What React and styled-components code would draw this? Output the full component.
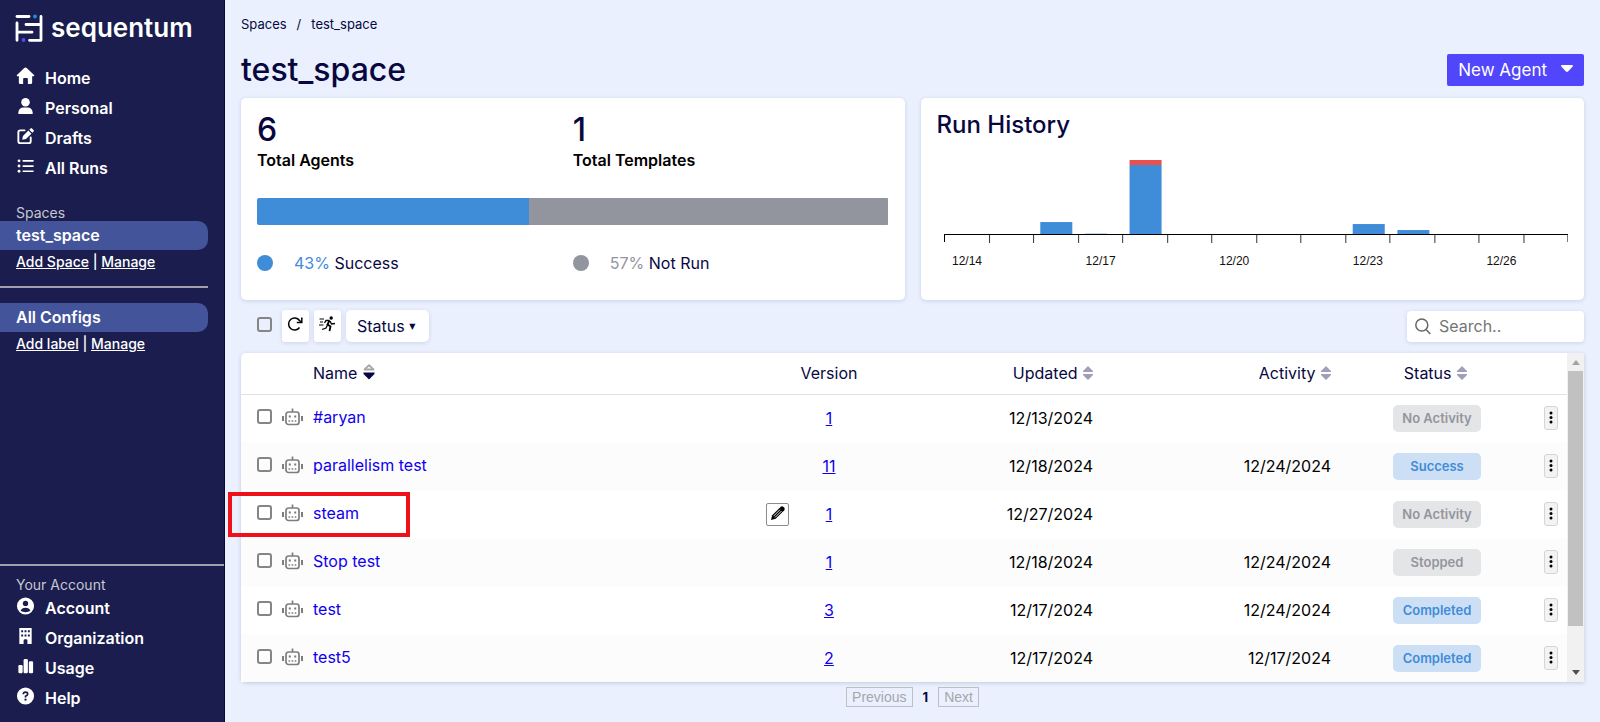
import React, { useState } from "react";
import styled, { createGlobalStyle } from "styled-components";

const navLinks = [
  { label: "Home", icon: "home" },
  { label: "Personal", icon: "person" },
  { label: "Drafts", icon: "draft" },
  { label: "All Runs", icon: "list" },
];

const accountLinks = [
  { label: "Account", icon: "account" },
  { label: "Organization", icon: "building" },
  { label: "Usage", icon: "usage" },
  { label: "Help", icon: "help" },
];

const agents = [
  { name: "#aryan", version: 1, updated: "12/13/2024", activity: "", status: "No Activity" },
  { name: "parallelism test", version: 11, updated: "12/18/2024", activity: "12/24/2024", status: "Success" },
  { name: "steam", version: 1, updated: "12/27/2024", activity: "", status: "No Activity", editable: true, marked: true },
  { name: "Stop test", version: 1, updated: "12/18/2024", activity: "12/24/2024", status: "Stopped" },
  { name: "test", version: 3, updated: "12/17/2024", activity: "12/24/2024", status: "Completed" },
  { name: "test5", version: 2, updated: "12/17/2024", activity: "12/17/2024", status: "Completed" },
];

// day index -> height of the successful and the failed part
const runs = [
  { day: 2, ok: 12, failed: 0 },
  { day: 4, ok: 69, failed: 5 },
  { day: 9, ok: 10, failed: 0 },
  { day: 10, ok: 4, failed: 0 },
];

const icons = {
  home: (
    <path d="M10 0.500Q10.700 0.500 11.300 1.100L19 8.300Q19.700 9.500 18.500 9.700H17V16.500Q17 18 15.500 18H12.500V12.500Q12.500 11.500 11.500 11.500H8.500Q7.500 11.500 7.500 12.500V18H4.500Q3 18 3 16.500V9.700H1.500Q0.300 9.500 1 8.300L8.700 1.100Q9.300 0.500 10 0.500Z" />
  ),
  person: (
    <>
      <circle cx="10" cy="5.500" r="4.500" />
      <path d="M2.500 18V16Q3 11 8 11H12Q17 11 17.500 16V18Z" />
    </>
  ),
  draft: (
    <>
      <path
        d="M9 3.500H4.500Q2.500 3.500 2.500 5.500V15Q2.500 17 4.500 17H13.500Q15.500 17 15.500 15V11"
        fill="none"
        stroke="#fff"
        strokeWidth="2"
        strokeLinecap="round"
      />
      <path d="M6.500 13.500L7.300 9.500L13 3.800L16.200 7L10.500 12.700Z" />
      <path d="M14 2.800L15.300 1.500Q16 0.800 16.800 1.500L18.500 3.200Q19.200 4 18.500 4.700L17.200 6Z" />
    </>
  ),
  list: (
    <>
      <path d="M7 4H18.500M7 9.500H18.500M7 15H18.500" stroke="#fff" strokeWidth="1.800" />
      <circle cx="3.200" cy="4" r="1.500" />
      <circle cx="3.200" cy="9.500" r="1.500" />
      <circle cx="3.200" cy="15" r="1.500" />
    </>
  ),
  account: (
    <>
      <circle cx="10" cy="9.500" r="9" />
      <circle cx="10" cy="6.800" r="2.800" fill="#1a1d4e" />
      <path d="M4.800 14.500Q6 11.300 10 11.300T15.200 14.500Q13 16 10 16T4.800 14.500Z" fill="#1a1d4e" />
    </>
  ),
  building: (
    <path
      fillRule="evenodd"
      d="M3.500 1H16.500V18H12V14Q12 13 10.500 13H9.500Q8 13 8 14V18H3.500ZM5.500 3.500V5.500H7.500V3.500ZM9 3.500V5.500H11V3.500ZM12.500 3.500V5.500H14.500V3.500ZM5.500 8V10H7.500V8ZM9 8V10H11V8ZM12.500 8V10H14.500V8Z"
    />
  ),
  usage: (
    <>
      <rect x="2.500" y="8.500" width="4.500" height="8.500" rx="1.300" />
      <rect x="8" y="2" width="4.500" height="15" rx="1.300" />
      <rect x="13.500" y="4.500" width="4.500" height="12.500" rx="1.300" />
    </>
  ),
  help: (
    <>
      <circle cx="10" cy="9.500" r="9" />
      <path d="M7.700 7.500Q7.700 5.300 10 5.300T12.300 7.300Q12.300 8.600 10 9.700V11" fill="none" stroke="#1a1d4e" strokeWidth="1.800" />
      <circle cx="10" cy="13.300" r="1.200" fill="#1a1d4e" />
    </>
  ),
};

const Logo = () => (
  <svg width="28" height="28" viewBox="0 0 28 28" fill="none" aria-hidden="true">
    <g stroke="#fff" strokeWidth="2.800" strokeLinecap="round" strokeLinejoin="round">
      <path d="M2 2.500H14" />
      <path d="M2 9V26.300M2 18.200H17" />
      <path d="M26 2.500V26.300H14.500M26 10.500H11" />
    </g>
    <circle cx="20" cy="2.500" r="1.900" fill="#1b8fe0" />
    <circle cx="8.500" cy="26" r="1.900" fill="#5a45ff" />
  </svg>
);

const Robot = () => (
  <svg width="21" height="18" viewBox="0 0 21 18" fill="none" stroke="#7d7d7d" aria-hidden="true">
    <rect x="4" y="4" width="13" height="12.500" rx="2.500" strokeWidth="1.700" />
    <path d="M10.500 0.500V4" strokeWidth="1.700" />
    <path d="M1 8V13M20 8V13" strokeWidth="2" />
    <path d="M6.800 8.500H8.800M12.200 8.500H14.200" strokeWidth="2" />
    <path d="M6.500 13H14.500" strokeWidth="1.400" strokeDasharray="1.600 1.500" />
  </svg>
);

const Refresh = () => (
  <svg width="17" height="16" viewBox="0 0 17 16" fill="none" stroke="#000" strokeWidth="1.500" aria-hidden="true">
    <path d="M12.500 11.500A6 6 0 1 1 12.500 4.500L14.500 6.200" />
    <path d="M14.800 1.500V6.500H9.800" />
  </svg>
);

const Runner = () => (
  <svg width="17" height="16" viewBox="0 0 17 16" fill="none" stroke="#000" strokeWidth="1.300" aria-hidden="true">
    <circle cx="12.200" cy="2" r="1.700" fill="#000" stroke="none" />
    <path d="M10.500 4.500L8.500 8.500L11.500 10.500L10.500 15" strokeWidth="1.800" />
    <path d="M8.500 9L7 12L3 13.500" />
    <path d="M10.500 4.500L7 4.500L5.500 7M11 5L12.500 8L16 7.500" />
    <path d="M0.500 3H5M1 6H4M0 9H4.500" strokeWidth="1" />
  </svg>
);

const Pencil = () => (
  <svg width="16" height="16" viewBox="0 0 16 16" aria-hidden="true">
    <path d="M1 15L2.200 10.300L10.800 1.700Q12.300 0.600 13.800 2.200T14.300 5.200L5.700 13.800Z" fill="#000" />
    <path d="M3.500 11.200L10 4.700M5 12.500L11.500 6" stroke="#fff" strokeWidth="0.900" />
  </svg>
);

const Magnifier = () => (
  <svg width="16" height="17" viewBox="0 0 16 17" fill="none" stroke="#666" strokeWidth="1.500" aria-hidden="true">
    <circle cx="6.800" cy="7" r="6" />
    <path d="M11 11.500L15.300 16" />
  </svg>
);

const SortArrows = ({ sorted }) =>
  sorted ? (
    <svg width="12" height="16" viewBox="0 0 12 16" aria-hidden="true">
      <path d="M1.500 5.500L6 1.200L10.500 5.500Z" fill="#fff" stroke="#a8a8a8" strokeWidth="1.800" strokeLinejoin="round" />
      <path d="M0.500 8.500H11.500V10L6 15.500L0.500 10Z" fill="#08083f" />
    </svg>
  ) : (
    <svg width="10" height="14" viewBox="0 0 10 14" aria-hidden="true">
      <path d="M0 6V5L5 0L10 5V6ZM0 8V9L5 14L10 9V8Z" fill="#9fa0b8" />
    </svg>
  );

const RunChart = () => (
  <svg width="100%" viewBox="-5 0 631 120" role="img" aria-label="Runs per day">
    {runs.map((run) => (
      <g key={run.day}>
        <rect x={9 + run.day * 44.600} y={78 - run.ok} width="32" height={run.ok} fill="#3f8cd9" />
        <rect x={9 + run.day * 44.600} y={78 - run.ok - run.failed} width="32" height={run.failed} fill="#ea5050" />
      </g>
    ))}
    <path d="M143 77.500H165" stroke="#c5d3f0" />
    <path d="M2.500 86V78.500H625.500V86" fill="none" stroke="#000" />
    {Array.from({ length: 13 }, (_, i) => (
      <path key={i} d={`M${Math.round((i + 1) * 44.500) + 2.5} 79V87`} stroke="#333" />
    ))}
    {["12/14", "12/17", "12/20", "12/23", "12/26"].map((day, i) => (
      <text
        key={day}
        x={25 + i * 133.500}
        y="109"
        textAnchor="middle"
        fontFamily="Liberation Sans, sans-serif"
        fontSize="12"
        fill="#111"
      >
        {day}
      </text>
    ))}
  </svg>
);

const NavList = ({ links }) => (
  <Nav>
    {links.map((link) => (
      <NavItem href="#" key={link.label}>
        <svg width="19" height="19" viewBox="0 0 20 20" fill="#fff" aria-hidden="true">
          {icons[link.icon]}
        </svg>
        {link.label}
      </NavItem>
    ))}
  </Nav>
);

const App = () => {
  const [search, setSearch] = useState("");

  return (
    <>
      <GlobalStyle />
      <Page>
        <Sidebar>
          <Brand>
            <Logo />
            sequentum
          </Brand>
          <NavList links={navLinks} />
          <Group>
            <Label>Spaces</Label>
            <Current href="#">test_space</Current>
            <Actions>
              <a href="#">Add Space</a> | <a href="#">Manage</a>
            </Actions>
          </Group>
          <Labels>
            <Current href="#">All Configs</Current>
            <Actions>
              <a href="#">Add label</a> | <a href="#">Manage</a>
            </Actions>
          </Labels>
          <AccountArea>
            <Label>Your Account</Label>
            <NavList links={accountLinks} />
          </AccountArea>
        </Sidebar>

        <Main>
          <Crumbs>
            <a href="#">Spaces</a>
            <span>/</span>
            <a href="#">test_space</a>
          </Crumbs>
          <Heading>
            <h1>test_space</h1>
            <NewAgent>
              New Agent
              <svg width="12" height="7" viewBox="0 0 12 7" aria-hidden="true">
                <path d="M1 0H11Q12.500 0.500 11.500 1.700L7 6.500Q6 7.300 5 6.500L0.500 1.700Q-0.500 0.500 1 0Z" fill="#fff" />
              </svg>
            </NewAgent>
          </Heading>

          <Cards>
            <Card>
              <Stats>
                <Stat>
                  <strong>6</strong>
                  <span>Total Agents</span>
                </Stat>
                <Stat>
                  <strong>1</strong>
                  <span>Total Templates</span>
                </Stat>
              </Stats>
              <Bar>
                <BarPart $color="#3f8cd9" $share={43} />
                <BarPart $color="#93959e" $share={57} />
              </Bar>
              <Stats>
                <Legend $color="#3f8cd9">
                  <i />
                  <b>43%</b> Success
                </Legend>
                <Legend $color="#93959e">
                  <i />
                  <b>57%</b> Not Run
                </Legend>
              </Stats>
            </Card>
            <Card>
              <h2>Run History</h2>
              <RunChart />
            </Card>
          </Cards>

          <Toolbar>
            <Tick type="checkbox" aria-label="Select all agents" />
            <ToolButton aria-label="Refresh">
              <Refresh />
            </ToolButton>
            <ToolButton aria-label="Run">
              <Runner />
            </ToolButton>
            <StatusButton>
              Status <small>▼</small>
            </StatusButton>
            <Search>
              <Magnifier />
              <input
                type="text"
                aria-label="Search"
                placeholder="Search.."
                value={search}
                onChange={(e) => setSearch(e.target.value)}
              />
            </Search>
          </Toolbar>

          <Panel>
            <Table>
              <colgroup>
                <Col $width={72} />
                <col />
                <Col $width={80} />
                <Col $width={224} />
                <Col $width={238} />
                <Col $width={150} />
                <Col $width={86} />
              </colgroup>
              <thead>
                <tr>
                  <th aria-label="Select" />
                  <Th $align="left">
                    Name <SortArrows sorted />
                  </Th>
                  <Th $align="center">Version</Th>
                  <Th $align="right">
                    Updated <SortArrows />
                  </Th>
                  <Th $align="right">
                    Activity <SortArrows />
                  </Th>
                  <Th $align="right">
                    <StatusHead>
                      Status <SortArrows />
                    </StatusHead>
                  </Th>
                  <th aria-label="Options" />
                </tr>
              </thead>
              <tbody>
                {agents.map((agent) => (
                  <tr key={agent.name}>
                    <Td>
                      <Select>
                        <Tick type="checkbox" aria-label={`Select ${agent.name}`} />
                        <Robot />
                        {agent.marked && <Marker />}
                      </Select>
                    </Td>
                    <Td>
                      <NameCell>
                        <a href="#">{agent.name}</a>
                        {agent.editable && (
                          <EditButton aria-label="Edit">
                            <Pencil />
                          </EditButton>
                        )}
                      </NameCell>
                    </Td>
                    <Td $align="center">
                      <VersionLink href="#">{agent.version}</VersionLink>
                    </Td>
                    <Td $align="right">{agent.updated}</Td>
                    <Td $align="right">{agent.activity}</Td>
                    <Td $align="right">
                      <Badge $blue={["Success", "Completed"].includes(agent.status)}>{agent.status}</Badge>
                    </Td>
                    <Td $align="right">
                      <MenuButton aria-label={`Options for ${agent.name}`}>
                        <svg width="4" height="13" viewBox="0 0 4 13" aria-hidden="true">
                          <circle cx="2" cy="2" r="1.500" />
                          <circle cx="2" cy="6.500" r="1.500" />
                          <circle cx="2" cy="11" r="1.500" />
                        </svg>
                      </MenuButton>
                    </Td>
                  </tr>
                ))}
              </tbody>
            </Table>
            <Scrollbar aria-hidden="true">
              <svg width="8" height="5" viewBox="0 0 8 5">
                <path d="M0 5L4 0L8 5Z" fill="#a3a3a3" />
              </svg>
              <Track>
                <Thumb />
              </Track>
              <svg width="8" height="5" viewBox="0 0 8 5">
                <path d="M0 0H8L4 5Z" fill="#505050" />
              </svg>
            </Scrollbar>
          </Panel>

          <Pager>
            <button disabled>Previous</button>
            <b>1</b>
            <button disabled>Next</button>
          </Pager>
        </Main>
      </Page>
    </>
  );
};

const GlobalStyle = createGlobalStyle`
  * {
    box-sizing: border-box;
    margin: 0;
    padding: 0;
  }
  body {
    font-family: Inter, sans-serif;
    font-size: 16px;
    color: #08083f;
    background: #eaf0fd;
  }
  button, input {
    font: inherit;
    color: inherit;
  }
  svg {
    flex-shrink: 0;
  }
`;

const Page = styled.div`
  display: flex;
  min-height: 100vh;
`;

const Sidebar = styled.aside`
  width: 225px;
  flex-shrink: 0;
  display: flex;
  flex-direction: column;
  color: #fff;
  background: #1a1d4e;
  border-right: 1px solid #08083f;
`;

const Brand = styled.div`
  display: flex;
  align-items: center;
  gap: 8px;
  height: 32px;
  margin: 12px 0 19px;
  padding-left: 15px;
  font-size: 26px;
  font-weight: 600;
  line-height: 32px;
`;

const Nav = styled.nav`
  display: flex;
  flex-direction: column;
`;

const NavItem = styled.a`
  display: flex;
  align-items: center;
  gap: 10px;
  height: 30px;
  padding-left: 16px;
  color: #fff;
  font-weight: 600;
  text-decoration: none;
  svg {
    margin-bottom: 4px;
  }
`;

const Group = styled.div`
  margin-top: 21px;
  padding-bottom: 12px;
  margin-right: 16px;
  border-bottom: 2px solid #a1a1ac;
`;

const Labels = styled.div`
  margin: 15px 16px 0 0;
`;

const Label = styled.p`
  padding-left: 16px;
  font-size: 14px;
  line-height: 17px;
  color: #c6c7d1;
`;

const Current = styled.a`
  display: block;
  padding-left: 16px;
  line-height: 29px;
  color: #fff;
  font-weight: 600;
  text-decoration: none;
  background: #43549a;
  border-radius: 0 10px 10px 0;
`;

const Actions = styled.p`
  padding-left: 16px;
  font-size: 14px;
  font-weight: 500;
  line-height: 24px;
  a {
    color: #fff;
  }
`;

const AccountArea = styled.div`
  margin-top: auto;
  padding: 10px 0 9px;
  border-top: 2px solid #a1a1ac;
`;

const Main = styled.main`
  flex: 1;
  min-width: 0;
  padding: 16px 16px 0;
`;

const Crumbs = styled.nav`
  display: flex;
  gap: 10px;
  font-size: 13px;
  line-height: 16px;
  a {
    color: inherit;
    text-decoration: none;
  }
`;

const Heading = styled.header`
  display: flex;
  align-items: center;
  justify-content: space-between;
  margin: 17px 0 7px;
  h1 {
    font-size: 32px;
    font-weight: 500;
    line-height: 42px;
  }
`;

const NewAgent = styled.button`
  display: flex;
  align-items: center;
  gap: 14px;
  height: 32px;
  padding: 0 11px;
  font-size: 17px;
  color: #fff;
  background: #5146fb;
  border: 0;
  border-radius: 2px;
  svg {
    margin-bottom: 4px;
  }
`;

const Cards = styled.section`
  display: grid;
  grid-template-columns: 1fr 1fr;
  gap: 16px;
`;

const Card = styled.div`
  min-width: 0;
  height: 202px;
  padding: 14px 16px;
  background: #fff;
  border-radius: 5px;
  box-shadow: 0 1px 4px rgba(40, 50, 110, 0.16);
  h2 {
    margin-bottom: 18px;
    font-size: 24px;
    font-weight: 500;
    line-height: 26px;
  }
`;

const Stats = styled.div`
  display: grid;
  grid-template-columns: 1fr 1fr;
`;

const Stat = styled.div`
  display: flex;
  flex-direction: column;
  strong {
    font-size: 32px;
    font-weight: 500;
    line-height: 36px;
  }
  span {
    color: #000;
    font-weight: 600;
    line-height: 24px;
  }
`;

const Bar = styled.div`
  display: flex;
  height: 27px;
  margin: 26px 0;
  border-radius: 2px;
  overflow: hidden;
`;

const BarPart = styled.div`
  width: ${({ $share }) => $share}%;
  background: ${({ $color }) => $color};
`;

const Legend = styled.p`
  display: flex;
  align-items: center;
  line-height: 24px;
  white-space: pre;
  i {
    width: 16px;
    height: 16px;
    margin-right: 21px;
    border-radius: 50%;
    background: ${({ $color }) => $color};
  }
  b {
    font-weight: 400;
    color: ${({ $color }) => $color};
  }
`;

const Tick = styled.input`
  appearance: none;
  width: 15px;
  height: 15px;
  border: 2px solid #858585;
  border-radius: 3px;
  background: transparent;
`;

const Toolbar = styled.div`
  display: flex;
  align-items: center;
  margin: 10px 0 11px;
  padding-left: 16px;
  ${Tick} {
    margin: 0 5px 4px 0;
  }
`;

const ToolButton = styled.button`
  display: flex;
  align-items: center;
  justify-content: center;
  width: 27px;
  height: 32px;
  margin-left: 5px;
  padding-bottom: 4px;
  background: #fff;
  border: 0;
  border-radius: 3px;
  box-shadow: 0 1px 4px rgba(40, 50, 110, 0.14);
`;

const StatusButton = styled(ToolButton)`
  width: auto;
  padding: 0 14px 0 11px;
  border-radius: 5px;
  white-space: pre;
  small {
    font-family: "DejaVu Sans", sans-serif;
    font-size: 8px;
  }
`;

const Search = styled.label`
  display: flex;
  align-items: center;
  gap: 8px;
  width: 177px;
  height: 31px;
  margin-left: auto;
  padding: 0 8px;
  background: #fff;
  border-radius: 4px;
  box-shadow: 0 1px 4px rgba(40, 50, 110, 0.14);
  input {
    flex: 1;
    min-width: 0;
    border: 0;
    outline: 0;
    background: none;
  }
  input::placeholder {
    color: #757575;
    opacity: 1;
  }
`;

const Panel = styled.section`
  display: flex;
  background: #fff;
  border-radius: 5px 0 0 5px;
  box-shadow: 0 1px 4px rgba(40, 50, 110, 0.2);
`;

const Table = styled.table`
  flex: 1;
  min-width: 0;
  table-layout: fixed;
  border-collapse: collapse;
  thead tr {
    height: 41px;
    border-bottom: 1px solid #e2e2e2;
  }
  tbody tr {
    height: 48px;
  }
  tbody tr:nth-child(even) {
    background: #fcfcfc;
  }
`;

const Col = styled.col`
  width: ${({ $width }) => $width}px;
`;

const Th = styled.th`
  font-weight: 400;
  text-align: ${({ $align }) => $align};
  white-space: nowrap;
  svg {
    margin-left: 1px;
    vertical-align: -1px;
  }
`;

const StatusHead = styled.span`
  padding-right: 14px;
`;

const Td = styled.td`
  color: #000;
  text-align: ${({ $align }) => $align || "left"};
  a {
    color: #1100ee;
  }
`;

const Select = styled.div`
  position: relative;
  display: flex;
  align-items: center;
  gap: 10px;
  padding: 0 0 3px 16px;
`;

// red frame drawn over the highlighted agent
const Marker = styled.span`
  position: absolute;
  top: -12px;
  left: -13px;
  width: 182px;
  height: 45px;
  border: 4px solid #ee1119;
  pointer-events: none;
`;

const NameCell = styled.div`
  display: flex;
  align-items: center;
  justify-content: space-between;
  a {
    padding-bottom: 2px;
    text-decoration: none;
  }
`;

const EditButton = styled.button`
  display: flex;
  align-items: center;
  justify-content: center;
  width: 23px;
  height: 23px;
  padding-bottom: 3px;
  background: #fff;
  border: 1px solid #8c8c8c;
  border-radius: 2px;
`;

const VersionLink = styled.a`
  text-decoration: underline;
`;

const Badge = styled.span`
  display: inline-block;
  width: 88px;
  border-radius: 5px;
  font-size: 13px;
  font-weight: 600;
  line-height: 27px;
  text-align: center;
  vertical-align: middle;
  color: ${({ $blue }) => ($blue ? "#3f8cd9" : "#93959e")};
  background: ${({ $blue }) => ($blue ? "#cddff4" : "#e4e5e6")};
`;

const MenuButton = styled.button`
  display: inline-flex;
  justify-content: center;
  width: 14px;
  height: 24px;
  margin-right: 9px;
  padding-top: 4px;
  vertical-align: middle;
  background: #f3f3f3;
  border: 1px solid #d4d4d4;
  border-radius: 3px;
`;

const Scrollbar = styled.div`
  display: flex;
  flex-direction: column;
  align-items: center;
  gap: 6px;
  width: 17px;
  padding: 7px 1px;
  background: #f1f1f1;
`;

const Track = styled.div`
  flex: 1;
  width: 100%;
`;

const Thumb = styled.div`
  height: 87%;
  background: #c1c1c1;
`;

const Pager = styled.nav`
  display: flex;
  align-items: center;
  justify-content: center;
  gap: 10px;
  padding: 5px 0;
  font-size: 14px;
  button {
    height: 20px;
    padding: 0 5px;
    font-family: "Liberation Sans", sans-serif;
    color: #a5a7ab;
    background: transparent;
    border: 1px solid #bfc0c4;
  }
  b {
    font-size: 13px;
  }
`;

export default App;
